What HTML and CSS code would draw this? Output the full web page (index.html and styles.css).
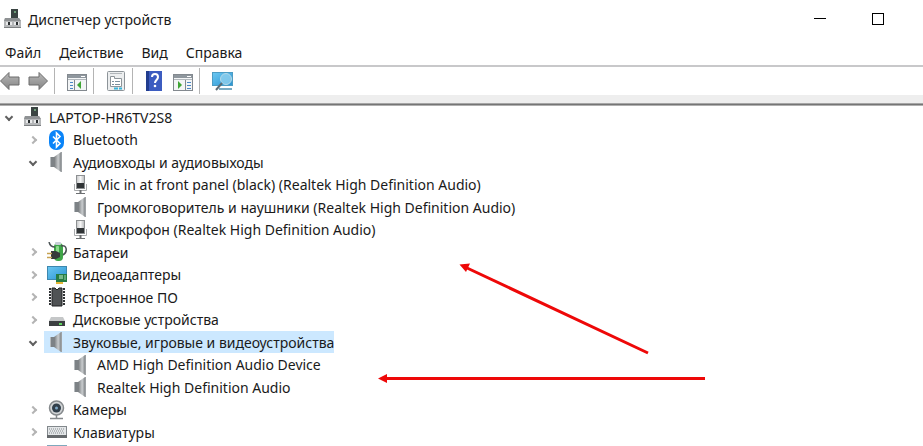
FILE: index.html
```html
<!DOCTYPE html>
<html lang="ru">
<head>
<meta charset="utf-8">
<meta name="viewport" content="width=device-width, initial-scale=1">
<title>Диспетчер устройств</title>
<link rel="stylesheet" href="styles.css">
</head>
<body>

<!-- shared icons -->
<svg class="sprite" aria-hidden="true">
  <defs>
    <linearGradient id="metal" x1="0" x2="1"><stop offset="0" stop-color="#74787b"/><stop offset=".6" stop-color="#c9ccce"/><stop offset="1" stop-color="#85898c"/></linearGradient>
    <linearGradient id="arrowFill" x1="0" x2="0" y1="0" y2="1"><stop offset="0" stop-color="#b8b8b8"/><stop offset="1" stop-color="#858585"/></linearGradient>
    <linearGradient id="screen" x1="0" x2="1" y1="0" y2="1"><stop offset="0" stop-color="#6cc8f2"/><stop offset="1" stop-color="#2a93d1"/></linearGradient>
    <linearGradient id="capsule" x1="0" x2="1"><stop offset="0" stop-color="#c4c6c8"/><stop offset=".5" stop-color="#f6f6f6"/><stop offset="1" stop-color="#b5b7b9"/></linearGradient>
  </defs>
  <symbol id="computer" viewBox="0 0 20 20">
    <rect x="8" y="0" width="7" height="9" fill="#3a4442"/>
    <rect x="11" y="2" width="2" height="2" fill="#6d9d78"/>
    <path d="M2 9h14l2 3v7H1v-7z" fill="#b4b6b8"/>
    <path d="M2 9h14l2 3H1z" fill="#8f9294"/>
    <path d="M1 18h17v1H1z" fill="#7d8082"/>
    <path d="M5 13h2v3H5zM13 13h2v3h-2z" fill="#2a2e30"/>
    <path d="M3 13h2v3H3zM7 13h2v3H7zM11 13h2v3h-2zM15 13h1v3h-1z" fill="#e8e9ea"/>
  </symbol>
  <symbol id="bluetooth" viewBox="0 0 20 20">
    <rect x="2" y="0" width="15" height="20" rx="7" fill="#0a84f8"/>
    <path d="M6 6.500l7 7-3.500 3.500V3L13 6.500l-7 7" fill="none" stroke="#fff" stroke-width="1.600"/>
  </symbol>
  <symbol id="speaker" viewBox="0 0 20 20">
    <path d="M3 5h4v10H3z" fill="#7d8286"/>
    <path d="M3 5h1v10H3z" fill="#b5babd"/>
    <path d="M7 5l7-5v20l-7-5z" fill="url(#metal)"/>
    <path d="M14 0h1v20h-1z" fill="#9da1a4"/>
  </symbol>
  <symbol id="mic" viewBox="0 0 20 20">
    <rect x="5.500" y=".5" width="8" height="13" fill="url(#capsule)" stroke="#8d9092"/>
    <rect x="6" y="8" width="7" height="5" fill="#303436"/>
    <path d="M3.500 9v6.500h12V9" fill="none" stroke="#a9abad"/>
    <path d="M9.500 15v3" stroke="#6c6f71" stroke-width="2"/>
    <path d="M5 18.500h9" stroke="#6c6f71"/>
  </symbol>
</svg>

<header class="titlebar">
  <svg class="icon"><use href="#computer"/></svg>
  <h1 class="title">Диспетчер устройств</h1>
  <div class="window-buttons">
    <button type="button" aria-label="Свернуть"><svg width="12" height="12"><path d="M0 5.500h12" stroke="#000"/></svg></button>
    <button type="button" aria-label="Развернуть"><svg width="12" height="12"><rect x=".5" y=".5" width="11" height="11" fill="none" stroke="#000"/></svg></button>
  </div>
</header>

<nav class="menu">
  <button type="button">Файл</button>
  <button type="button">Действие</button>
  <button type="button">Вид</button>
  <button type="button">Справка</button>
</nav>

<div class="toolbar">
  <button type="button" aria-label="Назад"><svg width="20" height="20" viewBox="0 0 20 20"><path d="M.5 10L9 1.500V6h10v8H9v4.500z" fill="url(#arrowFill)" stroke="#6d6d6d"/></svg></button>
  <button type="button" aria-label="Вперёд"><svg width="20" height="20" viewBox="0 0 20 20"><path d="M19.500 10L11 1.500V6H1v8h10v4.500z" fill="url(#arrowFill)" stroke="#6d6d6d"/></svg></button>
  <span class="divider"></span>
  <button type="button" aria-label="Дерево консоли"><svg width="20" height="20" viewBox="0 0 20 20"><rect x=".5" y="3.500" width="19" height="16" fill="#f3f5f6" stroke="#83898f"/><path d="M1 4h18v3H1z" fill="#8f979e"/><path d="M14 5.500h4" stroke="#fff"/><path d="M1 8.500h18" stroke="#b2b8bd"/><path d="M7.500 9v10" stroke="#83898f"/><path d="M3 11.500h3M3 14.500h3M3 17.500h3" stroke="#4a86c5"/><path d="M14 10v8l-4-4z" fill="#3fa535"/></svg></button>
  <span class="divider"></span>
  <button type="button" aria-label="Свойства"><svg width="20" height="20" viewBox="0 0 20 20"><rect x="1.500" y=".5" width="17" height="19" rx="1" fill="#eceeef" stroke="#8d9499"/><path d="M4 2.500h12" stroke="#b2b7bb"/><path d="M4.500 5.500h4v2h7v8h-11z" fill="#fff" stroke="#8d9499"/><path d="M6 10.500h2M9 10.500h5M6 13.500h2M9 13.500h5" stroke="#7b8f9d"/><path d="M8 17.500h4M13 17.500h3" stroke="#37b3d9" stroke-width="2"/></svg></button>
  <span class="divider"></span>
  <button type="button" aria-label="Справка"><svg width="20" height="20" viewBox="0 0 20 20"><rect x="1" y="0" width="16" height="20" fill="#3c5cc0"/><rect x="1" y="0" width="3" height="20" fill="#223d8f"/><path d="M7 6c0-4 6-4 6 0 0 3-3 3-3 6" fill="none" stroke="#fff" stroke-width="2"/><circle cx="10" cy="15" r="1.300" fill="#fff"/></svg></button>
  <button type="button" aria-label="Панель действий"><svg width="20" height="20" viewBox="0 0 20 20"><rect x=".5" y="3.500" width="19" height="16" fill="#f3f5f6" stroke="#83898f"/><path d="M1 4h18v3H1z" fill="#8f979e"/><path d="M14 5.500h4" stroke="#fff"/><path d="M1 8.500h18" stroke="#b2b8bd"/><path d="M12.500 9v10" stroke="#83898f"/><path d="M14 11.500h4M14 14.500h4M14 17.500h4" stroke="#4a86c5"/><path d="M5 10v8l4-4z" fill="#3fa535"/></svg></button>
  <span class="divider"></span>
  <button type="button" aria-label="Обновить конфигурацию"><svg width="22" height="20" viewBox="0 0 22 20"><rect x=".5" y="1.500" width="20" height="13" fill="url(#screen)" stroke="#4c9cc4"/><path d="M7 17h13v2H7z" fill="#78aac3"/><circle cx="14" cy="8" r="5.500" fill="#8fd0ee" fill-opacity=".8" stroke="#b5d9e8"/><path d="M10 12l-6 7" stroke="#5d6c75" stroke-width="2"/></svg></button>
</div>

<main class="content">
  <ul class="tree">
    <li class="row root open"><svg class="icon"><use href="#computer"/></svg>LAPTOP-HR6TV2S8</li>
    <li class="row closed"><svg class="icon"><use href="#bluetooth"/></svg>Bluetooth</li>
    <li class="row open"><svg class="icon"><use href="#speaker"/></svg>Аудиовходы и аудиовыходы</li>
    <li class="row leaf"><svg class="icon"><use href="#mic"/></svg>Mic in at front panel (black) (Realtek High Definition Audio)</li>
    <li class="row leaf"><svg class="icon"><use href="#speaker"/></svg>Громкоговоритель и наушники (Realtek High Definition Audio)</li>
    <li class="row leaf"><svg class="icon"><use href="#mic"/></svg>Микрофон (Realtek High Definition Audio)</li>
    <li class="row closed"><svg class="icon" viewBox="0 0 20 20"><rect x="7" y="1" width="9" height="18" rx="4" fill="#3fa648"/><rect x="9" y="4" width="3" height="8" rx="1" fill="#8ddb8c"/><rect x="8" y="0" width="6" height="3" rx="1" fill="#c9cfd8"/><path d="M14 4c6-2 7 6 2 9M2 0c1 4 3 5 6 5" fill="none" stroke="#4a5254" stroke-width="1.500"/><path d="M4 9h5l4 2v4l-4 2H4z" fill="#373b3c"/><path d="M0 11.500h5M0 15.500h5" stroke="#c6a252" stroke-width="1.500"/></svg>Батареи</li>
    <li class="row closed"><svg class="icon" viewBox="0 0 20 20"><rect x=".5" y="1.500" width="19" height="13" fill="url(#screen)" stroke="#3d87ae"/><path d="M9 9h11v8H9z" fill="#267c43"/><path d="M12 10h4v4h-4z" fill="#77b88a"/><path d="M9 17h7v2H9z" fill="#e6b737"/><path d="M17 10h2v5h-2z" fill="#5da777"/></svg>Видеоадаптеры</li>
    <li class="row closed"><svg class="icon" viewBox="0 0 20 20"><path d="M5 1h3l2 2 2-2h3v18H5z" fill="#505355" stroke="#202224"/><path d="M3 1v18M17 1v18" stroke="#303335" stroke-width="2" stroke-dasharray="2 1"/></svg>Встроенное ПО</li>
    <li class="row closed"><svg class="icon" viewBox="0 0 20 20"><path d="M4 7h12l2 4H2z" fill="#c5c7c8"/><path d="M2 11h16v5H2z" fill="#3c3f41"/><path d="M12 13h3v2h-3z" fill="#5fd35f"/></svg>Дисковые устройства</li>
    <li class="row open"><span class="selected"><svg class="icon"><use href="#speaker"/></svg>Звуковые, игровые и видеоустройства</span></li>
    <li class="row leaf"><svg class="icon"><use href="#speaker"/></svg>AMD High Definition Audio Device</li>
    <li class="row leaf"><svg class="icon"><use href="#speaker"/></svg>Realtek High Definition Audio</li>
    <li class="row closed"><svg class="icon" viewBox="0 0 20 20"><circle cx="9.500" cy="8" r="7" fill="#d1d4d6" stroke="#85898c" stroke-width="1.500"/><circle cx="9.500" cy="8" r="4.500" fill="#303e4a"/><circle cx="9.500" cy="8" r="1.500" fill="#7da7c6"/><path d="M9.500 15v3M3 18.500h13" stroke="#85898c" stroke-width="1.500"/></svg>Камеры</li>
    <li class="row closed"><svg class="icon" viewBox="0 0 20 20"><rect x=".5" y="4.500" width="19" height="11" fill="#e3e6e8" stroke="#82888c"/><path d="M2 7h16M3 9h14M2 11h16" stroke="#858b8f" stroke-dasharray="1 1"/><path d="M0 13h20v3H0z" fill="#65696c"/></svg>Клавиатуры</li>
    <li class="row closed"><svg class="icon" viewBox="0 0 20 20"><rect x="0" y="0" width="20" height="13" fill="#7fa9bd"/></svg></li>
  </ul>

  <!-- red pointers over the list -->
  <svg class="pointers" width="720" height="300" viewBox="0 0 720 300" aria-hidden="true">
    <path d="M648 250L466 164.500M705 275.500H384" stroke="#ee0808" stroke-width="3"/>
    <path d="M459.500 161.500l10.500-1-4 8.500zM378 275.500l9-4.500v9z" fill="#ee0808"/>
  </svg>
</main>

</body>
</html>
```
FILE: styles.css
```css
*, *::before {
  box-sizing: border-box;
}

body {
  margin: 0;
  height: 100vh;
  overflow: hidden;
  display: flex;
  flex-direction: column;
  background: #fff;
  color: #1a1a1a;
  font-family: "Noto Sans", "Open Sans", sans-serif;
  font-size: 14px;
}

button {
  padding: 0;
  border: none;
  background: none;
  color: inherit;
  font: inherit;
}

svg {
  display: block;
  flex: none;
}

.sprite {
  position: absolute;
  width: 0;
  height: 0;
}

.icon {
  width: 20px;
  height: 20px;
}

/* Title bar */
.titlebar {
  display: flex;
  align-items: center;
  height: 38px;
  padding-left: 3px;
}

.title {
  margin: 0 0 0 5px;
  font-size: 14px;
  font-weight: 400;
}

.window-buttons {
  display: flex;
  margin-left: auto;
  padding-right: 16px;
}

.window-buttons button {
  display: flex;
  align-items: center;
  justify-content: center;
  width: 58px;
  height: 38px;
}

/* Menu */
.menu {
  display: flex;
  align-items: center;
  gap: 18px;
  height: 29px;
  padding: 2px 0 0 5px;
  border-bottom: 2px solid #c8c8ca;
}

/* Toolbar */
.toolbar {
  display: flex;
  align-items: center;
  gap: 8px;
  height: 28px;
}

.divider {
  width: 1px;
  height: 26px;
  margin: 0 4px 0 -2px;
  background: #b4b4b4;
}

/* Device tree */
.content {
  position: relative;
  flex: 1;
  min-height: 0;
  border-top: 8px solid #eee;
}

.tree {
  display: grid;
  grid-auto-rows: 22px 23px;
  margin: 0;
  padding: 3px 0 0;
  background: linear-gradient(#a6a6a6 1px, #757575 1px 2px, #b0b0b0 2px 3px, #fff 3px);
  list-style: none;
}

.row {
  display: flex;
  align-items: center;
  padding-left: 30px;
  white-space: nowrap;
}

.row .icon {
  margin-right: 6px;
}

.root {
  padding-left: 6px;
}

.leaf {
  padding-left: 71px;
}

/* Expand arrows */
.open::before,
.closed::before {
  content: "";
  width: 6px;
  height: 6px;
  margin-right: 11px;
  border: solid #606060;
  border-width: 0 2px 2px 0;
  transform: rotate(45deg);
}

.closed::before {
  border-color: #b4b4b4;
  transform: rotate(-45deg);
}

.selected {
  display: flex;
  align-items: center;
  height: 100%;
  margin-left: -3px;
  padding-left: 3px;
  background: #cce8ff;
}

.pointers {
  position: absolute;
  top: 0;
  left: 0;
}
```
